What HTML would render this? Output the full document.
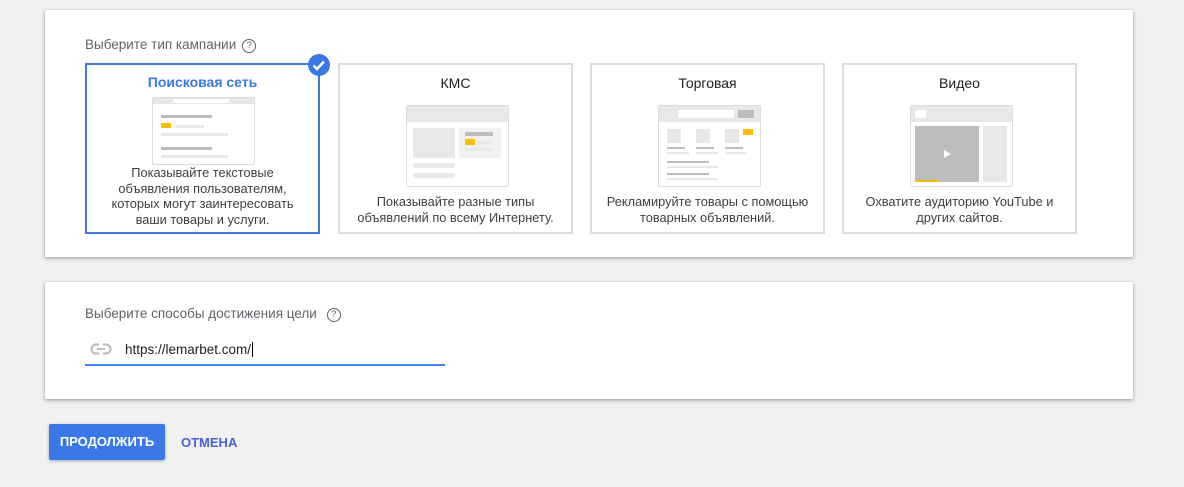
<!DOCTYPE html><html><head><meta charset="utf-8"><style>
body{margin:0;width:1184px;height:487px;background:#f1f1f2;font-family:"Liberation Sans",sans-serif;position:relative;overflow:hidden}
.card{position:absolute;background:#fff;box-shadow:0 1px 3px rgba(0,0,0,.3),0 2px 6px rgba(0,0,0,.1)}
.lbl{position:absolute;color:#5f6368;font-size:13.5px}
.q{display:inline-block;width:12px;height:12px;border:1.3px solid #5f6368;border-radius:50%;font-size:9.5px;text-align:center;line-height:12px;vertical-align:1px;margin-left:6px}
.t{position:absolute;top:63px;border:2px solid #dadce0;box-sizing:border-box;width:235px;height:171px}
.t.sel{border-color:#4078dc}
.tt{position:absolute;top:10px;left:0;right:0;text-align:center;font-size:14px;color:#202124}
.d{position:absolute;left:0;right:0;text-align:center;font-size:12.8px;line-height:15.5px;color:#3c4043}
.il{position:absolute;left:66px;width:101px;height:80px;border:1px solid #dadce0;border-radius:2px;background:#fff;overflow:hidden}
.il div{position:absolute}
.g1{background:#e8e8e8}.g2{background:#bdbdbd}.y{background:#fbbc04}.g3{background:#f1f1f1}
</style></head><body>
<div class="card" style="left:45px;top:10px;width:1088px;height:247px"></div>
<div class="lbl" style="left:85px;top:37px">Выберите тип кампании<span class="q">?</span></div>

<div class="t sel" style="left:85px">
<div class="tt" style="color:#3b78e7;font-weight:bold;top:9px">Поисковая сеть</div>
<div class="il" style="top:32px;height:66px;left:65px">
<div class="g1" style="left:0;top:0;right:0;height:6px"></div>
<div style="left:20px;top:1px;width:56px;height:4px;background:#fff"></div>
<div class="g2" style="left:8px;top:17px;width:51px;height:3px"></div>
<div class="y" style="left:8px;top:25px;width:10px;height:5px"></div>
<div class="g1" style="left:22px;top:27px;width:29px;height:3px"></div>
<div class="g1" style="left:8px;top:35px;width:67px;height:3px"></div>
<div class="g2" style="left:8px;top:49px;width:51px;height:3px"></div>
<div class="g1" style="left:8px;top:57px;width:67px;height:3px"></div>
</div>
<div class="d" style="top:100px">Показывайте текстовые<br>объявления пользователям,<br>которых могут заинтересовать<br>ваши товары и услуги.</div>
</div>
<svg style="position:absolute;left:307px;top:53px" width="24" height="24"><circle cx="12" cy="12" r="11" fill="#3b78e7"/><path d="M6.5 12.5l3.5 3.5 7-7.5" stroke="#fff" stroke-width="2.6" fill="none"/></svg>

<div class="t" style="left:338px">
<div class="tt">КМС</div>
<div class="il" style="top:40px">
<div class="g1" style="left:0;top:0;right:0;height:16px"></div>
<div class="g1" style="left:6px;top:22px;width:42px;height:30px"></div>
<div class="g3" style="left:52px;top:22px;width:42px;height:30px"></div>
<div class="g2" style="left:58px;top:26px;width:28px;height:4px"></div>
<div class="y" style="left:58px;top:33px;width:10px;height:6px"></div>
<div class="g1" style="left:71px;top:35px;width:15px;height:3px"></div>
<div class="g1" style="left:58px;top:42px;width:28px;height:3px"></div>
<div class="g1" style="left:6px;top:57px;width:42px;height:5px;border-radius:3px"></div>
<div class="g1" style="left:6px;top:67px;width:42px;height:5px;border-radius:3px"></div>
</div>
<div class="d" style="top:129px">Показывайте разные типы<br>объявлений по всему Интернету.</div>
</div>

<div class="t" style="left:590px">
<div class="tt">Торговая</div>
<div class="il" style="top:40px">
<div class="g1" style="left:0;top:0;right:0;height:16px"></div>
<div style="left:19px;top:4px;width:56px;height:8px;background:#fff"></div>
<div class="g2" style="left:79px;top:4px;width:16px;height:8px"></div>
<div class="g1" style="left:8px;top:23px;width:14px;height:14px"></div>
<div class="g1" style="left:37px;top:23px;width:14px;height:14px"></div>
<div class="g1" style="left:66px;top:23px;width:14px;height:14px"></div>
<div class="y" style="left:84px;top:23px;width:10px;height:6px"></div>
<div class="g2" style="left:8px;top:41px;width:18px;height:2px"></div>
<div class="g2" style="left:37px;top:41px;width:18px;height:2px"></div>
<div class="g2" style="left:66px;top:41px;width:18px;height:2px"></div>
<div class="g1" style="left:8px;top:46px;width:22px;height:2px"></div>
<div class="g1" style="left:37px;top:46px;width:22px;height:2px"></div>
<div class="g1" style="left:66px;top:46px;width:22px;height:2px"></div>
<div class="g2" style="left:8px;top:55px;width:42px;height:2px"></div>
<div class="g1" style="left:8px;top:60px;width:51px;height:2px"></div>
<div class="g2" style="left:8px;top:67px;width:42px;height:2px"></div>
<div class="g1" style="left:8px;top:72px;width:51px;height:2px"></div>
</div>
<div class="d" style="top:129px">Рекламируйте товары с помощью<br>товарных объявлений.</div>
</div>

<div class="t" style="left:842px">
<div class="tt">Видео</div>
<div class="il" style="top:40px">
<div class="g1" style="left:0;top:0;right:0;height:16px"></div>
<div style="left:4px;top:4px;width:11px;height:8px;background:#fff;border-radius:2px"></div>
<div class="g2" style="left:4px;top:20px;width:64px;height:56px"></div>
<div class="y" style="left:4px;top:74px;width:24px;height:2px"></div>
<div style="left:33px;top:44px;width:0;height:0;border-left:7px solid #fff;border-top:4px solid transparent;border-bottom:4px solid transparent"></div>
<div class="g1" style="left:72px;top:20px;width:24px;height:56px"></div>
</div>
<div class="d" style="top:129px">Охватите аудиторию YouTube и<br>других сайтов.</div>
</div>

<div class="card" style="left:45px;top:282px;width:1088px;height:117px"></div>
<div class="lbl" style="left:85px;top:306px">Выберите способы достижения цели<span class="q" style="margin-left:10px">?</span></div>
<svg style="position:absolute;left:90px;top:343px" width="22" height="12"><rect x="1.5" y="1.5" width="19" height="9" rx="4.5" fill="none" stroke="#bdbdbd" stroke-width="2.2"/><rect x="7" y="5" width="8" height="2" fill="#bdbdbd"/><rect x="9" y="0" width="4" height="4" fill="#fff"/><rect x="9" y="8" width="4" height="4" fill="#fff"/></svg>
<div style="position:absolute;left:125px;top:342px;font-size:13.5px;color:#202124">https://lemarbet.com/<span style="border-left:1px solid #000;margin-left:1px"></span></div>
<div style="position:absolute;left:85px;top:364px;width:360px;height:2px;background:#4285f4"></div>

<div style="position:absolute;left:49px;top:424px;width:116px;height:36px;background:#3b78e7;border-radius:2px;box-shadow:0 1px 3px rgba(0,0,0,.3);color:#fff;font-weight:bold;font-size:13px;line-height:36px;text-align:center">ПРОДОЛЖИТЬ</div>
<div style="position:absolute;left:181px;top:435px;font-weight:bold;font-size:13px;color:#4a62d0">ОТМЕНА</div>
</body></html>
